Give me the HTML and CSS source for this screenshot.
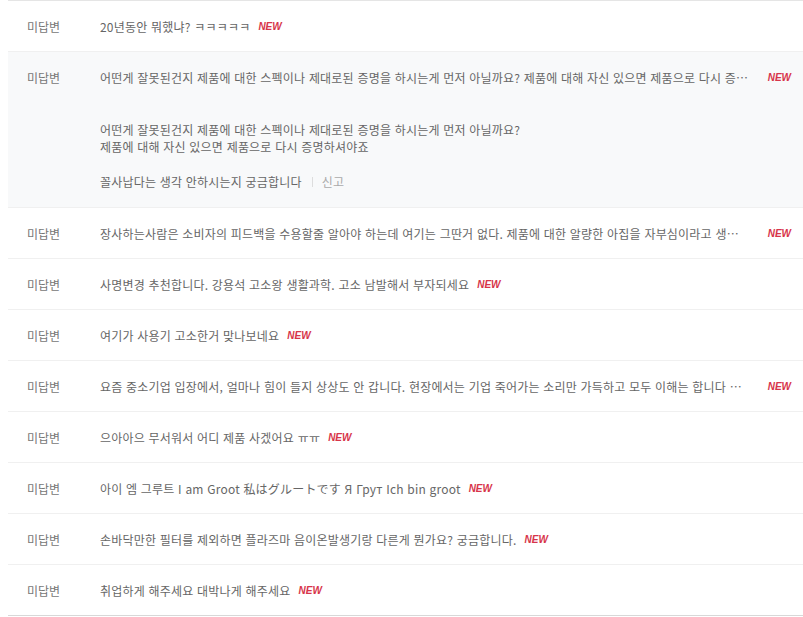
FILE: index.html
```html
<!DOCTYPE html>
<html lang="ko">

<head>
    <meta charset="UTF-8">
    <meta name="viewport" content="width=device-width, initial-scale=1.0">
    <title>Q&amp;A</title>
    <link rel="stylesheet" href="styles.css">
</head>

<body>
    <ul class="qna">
        <li class="row">
            <span class="state">미답변</span>
            <span class="subject"><span class="text">20년동안 뭐했냐? ㅋㅋㅋㅋㅋ</span><em class="new">NEW</em></span>
        </li>
        <li class="row open long">
            <span class="state">미답변</span>
            <span class="subject"><span class="text">어떤게 잘못된건지 제품에 대한 스펙이나 제대로된 증명을 하시는게 먼저 아닐까요? 제품에 대해 자신 있으면 제품으로 다시 증명하셔야죠</span><em class="new">NEW</em></span>
        </li>
        <li class="detail">
            <p class="body">어떤게 잘못된건지 제품에 대한 스펙이나 제대로된 증명을 하시는게 먼저 아닐까요?<br>제품에 대해 자신 있으면 제품으로 다시 증명하셔야죠</p>
            <div class="meta"><span>꼴사납다는 생각 안하시는지 궁금합니다</span><span class="bar"></span><a class="report">신고</a></div>
        </li>
        <li class="row long">
            <span class="state">미답변</span>
            <span class="subject"><span class="text">장사하는사람은 소비자의 피드백을 수용할줄 알아야 하는데 여기는 그딴거 없다. 제품에 대한 알량한 아집을 자부심이라고 생각하는 모양입니다</span><em class="new">NEW</em></span>
        </li>
        <li class="row">
            <span class="state">미답변</span>
            <span class="subject"><span class="text">사명변경 추천합니다. 강용석 고소왕 생활과학. 고소 남발해서 부자되세요</span><em class="new">NEW</em></span>
        </li>
        <li class="row">
            <span class="state">미답변</span>
            <span class="subject"><span class="text">여기가 사용기 고소한거 맞나보네요</span><em class="new">NEW</em></span>
        </li>
        <li class="row long">
            <span class="state">미답변</span>
            <span class="subject"><span class="text">요즘 중소기업 입장에서, 얼마나 힘이 들지 상상도 안 갑니다. 현장에서는 기업 죽어가는 소리만 가득하고 모두 이해는 합니다 다만 이건 아니죠</span><em class="new">NEW</em></span>
        </li>
        <li class="row">
            <span class="state">미답변</span>
            <span class="subject"><span class="text">으아아으 무서워서 어디 제품 사겠어요 ㅠㅠ</span><em class="new">NEW</em></span>
        </li>
        <li class="row">
            <span class="state">미답변</span>
            <span class="subject"><span class="text">아이 엠 그루트 I am Groot 私はグルートです Я Грут Ich bin groot</span><em class="new">NEW</em></span>
        </li>
        <li class="row">
            <span class="state">미답변</span>
            <span class="subject"><span class="text">손바닥만한 필터를 제외하면 플라즈마 음이온발생기랑 다른게 뭔가요? 궁금합니다.</span><em class="new">NEW</em></span>
        </li>
        <li class="row last">
            <span class="state">미답변</span>
            <span class="subject"><span class="text">취업하게 해주세요 대박나게 해주세요</span><em class="new">NEW</em></span>
        </li>
    </ul>
</body>

</html>
```

FILE: styles.css
```css
body {
    margin: 0;
    padding: 0;
    background: #fff;
    font-family: "Noto Sans CJK KR", "Noto Sans", sans-serif;
    font-size: 12px;
    color: #666;
}

.qna {
    list-style: none;
    margin: 0 0 0 8px;
    padding: 0;
    border-top: 1px solid #e5e5e5;
}

.row {
    display: flex;
    align-items: center;
    height: 50px;
    border-bottom: 1px solid #f0f0f0;
}

.row.last {
    border-bottom-color: #d8d8d8;
}

.row.open {
    background: #f8f9fa;
    border-bottom: none;
}

.state {
    flex: none;
    width: 73px;
    padding-left: 19px;
    color: #777;
}

.subject {
    display: flex;
    align-items: center;
    min-width: 0;
    flex: 1;
    padding-right: 12px;
}

.text {
    white-space: nowrap;
    overflow: hidden;
    text-overflow: ellipsis;
    min-width: 0;
    letter-spacing: 0.2px;
}

.long .text {
    flex: 1;
    padding-right: 10px;
}

.new {
    flex: none;
    margin-left: 8px;
    font-family: "Liberation Sans", Arial, sans-serif;
    font-size: 10px;
    font-weight: bold;
    font-style: italic;
    color: #d7354a;
}

.long .new {
    margin-left: 9px;
}

.detail {
    background: #f8f9fa;
    padding: 19px 20px 17px 92px;
    border-bottom: 1px solid #f0f0f0;
    letter-spacing: 0.2px;
}

.body {
    margin: 0;
    line-height: 17px;
    color: #666;
}

.meta {
    display: flex;
    align-items: center;
    margin-top: 18px;
    line-height: 17px;
}

.bar {
    width: 1px;
    height: 10px;
    background: #ddd;
    margin: 0 9px 0 10px;
}

.report {
    color: #aaa;
}
```
